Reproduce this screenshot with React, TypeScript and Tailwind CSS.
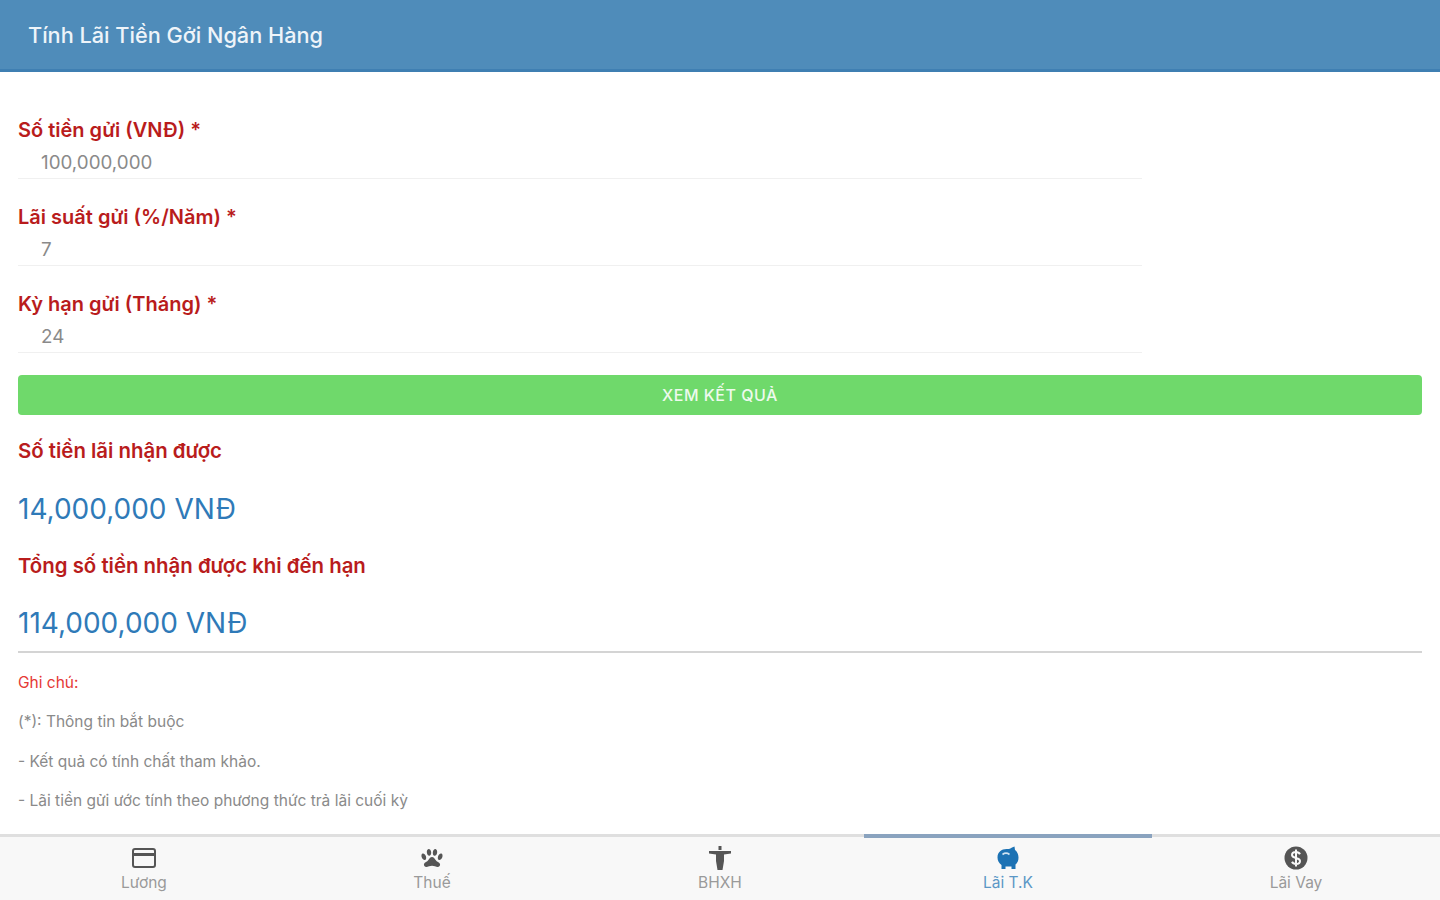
import type { ReactNode } from "react";
import { IoIosPaw } from "react-icons/io";

const font = { fontFamily: "Inter, Roboto, 'Noto Sans', sans-serif" };

function Field({ label, value }: { label: string; value: string }) {
  return (
    <div className="w-[1124px] h-[87px] flex flex-col">
      <div className="h-[27px] pt-[3px] text-[20px] leading-[24px] font-semibold text-[#b91c1c]">{label}</div>
      <div className="h-[37px] pl-[23px] pt-[9px] border-b border-[#f0f0f0] text-[18.800px] leading-[24px] text-[#8a8a8a]">{value}</div>
    </div>
  );
}

function Tab({ label, icon, active }: { label: string; icon: ReactNode; active?: boolean }) {
  return (
    <div className={`flex-1 flex flex-col items-center ${active ? "text-[#5b97c6]" : "text-[#9a9a9a]"}`}>
      <div className={`w-full h-[4px] -mt-[3px] ${active ? "bg-[#8aa3bf]" : ""}`} />
      <div className={`h-[26px] mt-[7px] flex items-center justify-center text-[26px] ${active ? "text-[#1c72b4]" : "text-[#555555]"}`}>{icon}</div>
      <div className="text-[15.500px] leading-[20px] mt-[2px]">{label}</div>
    </div>
  );
}

export default function App() {
  return (
    <div className="w-[1440px] h-[900px] bg-white flex flex-col overflow-hidden" style={font}>
      <header className="h-[72px] shrink-0 bg-[#4f8cba] border-b-[3px] border-[#3f7fb2] flex items-center pl-[28px] pt-[1px]">
        <h1 className="text-[21.700px] font-medium text-[#eef4f9]">Tính Lãi Tiền Gởi Ngân Hàng</h1>
      </header>
      <main className="flex-1 px-[18px] pt-[43px]">
        <Field label="Số tiền gửi (VNĐ) *" value="100,000,000" />
        <Field label="Lãi suất gửi (%/Năm) *" value="7" />
        <Field label="Kỳ hạn gửi (Tháng) *" value="24" />
        <button className="-mt-[1px] w-[1404px] h-[40px] rounded-[4px] bg-[#6fd96b] text-[#eefaee] text-[16px] font-medium tracking-[0.5px]">XEM KẾT QUẢ</button>
        <div className="mt-[22px] text-[20.400px] leading-[28px] font-semibold text-[#b91c1c]">Số tiền lãi nhận được</div>
        <div className="mt-[23px] text-[28px] leading-[42px] text-[#2f7ab8]">14,000,000 VNĐ</div>
        <div className="mt-[22px] text-[20.400px] leading-[28px] font-semibold text-[#b91c1c]">Tổng số tiền nhận được khi đến hạn</div>
        <div className="mt-[22px] text-[28px] leading-[42px] text-[#2f7ab8]">114,000,000 VNĐ</div>
        <div className="mt-[7px] h-[2px] bg-[#d4d4d4]" />
        <div className="mt-[20px] text-[15.500px] leading-[20px] text-[#e53935]">Ghi chú:</div>
        <div className="mt-[19px] text-[15.500px] leading-[20px] text-[#8a8a8a]">(*): Thông tin bắt buộc</div>
        <div className="mt-[20px] text-[15.500px] leading-[20px] text-[#8a8a8a]">- Kết quả có tính chất tham khảo.</div>
        <div className="mt-[19px] text-[15.500px] leading-[20px] text-[#8a8a8a]">- Lãi tiền gửi ước tính theo phương thức trả lãi cuối kỳ</div>
      </main>
      <nav className="h-[66px] shrink-0 bg-[#f8f8f8] border-t-[3px] border-[#dfdfdf] flex">
        <Tab
          label="Lương"
          icon={
            <svg width="26" height="26" viewBox="0 0 26 26" fill="none" stroke="currentColor">
              <rect x="2" y="4" width="22" height="18" rx="2" strokeWidth="2" />
              <path d="M2 9.500h22" strokeWidth="3" />
            </svg>
          }
        />
        <Tab label="Thuế" icon={<IoIosPaw />} />
        <Tab
          label="BHXH"
          icon={
            <svg width="26" height="26" viewBox="0 0 26 26" fill="currentColor">
              <rect x="11.500" y="1" width="3" height="4" />
              <path d="M2 6h22v2.500l-7 1V16l-1.500 9h-5L9 16V9.500l-7-1z" />
            </svg>
          }
        />
        <Tab
          label="Lãi T.K"
          active
          icon={
            <svg width="26" height="26" viewBox="0 0 26 26">
              <path fill="currentColor" d="M17 2.500l2.500-1 .5 3.500c2 1.500 3.500 4 3.500 7.500 0 3.500-1.200 5.500-3 7V24h-4v-2.500h-6V24H6.500v-4C4 18 2.500 15.500 2.500 12.500 2.500 7 6.500 4 11.500 4c2 0 3.500.2 5.500-1.500z" />
              <path d="M7.500 9.500c2-1.500 5-1.500 7 0" fill="none" stroke="#cfe3f2" strokeWidth="1.600" />
            </svg>
          }
        />
        <Tab
          label="Lãi Vay"
          icon={
            <svg width="26" height="26" viewBox="0 0 26 26">
              <circle cx="13" cy="13" r="11.500" fill="currentColor" />
              <path d="M17 9.200c-.7-1.400-2.200-2.200-4-2.200-2.300 0-4 1.200-4 3 0 4 8 2 8 6 0 1.800-1.700 3-4 3-1.800 0-3.300-.8-4-2.200M13 4.500v17" fill="none" stroke="#f8f8f8" strokeWidth="2" />
            </svg>
          }
        />
      </nav>
    </div>
  );
}
